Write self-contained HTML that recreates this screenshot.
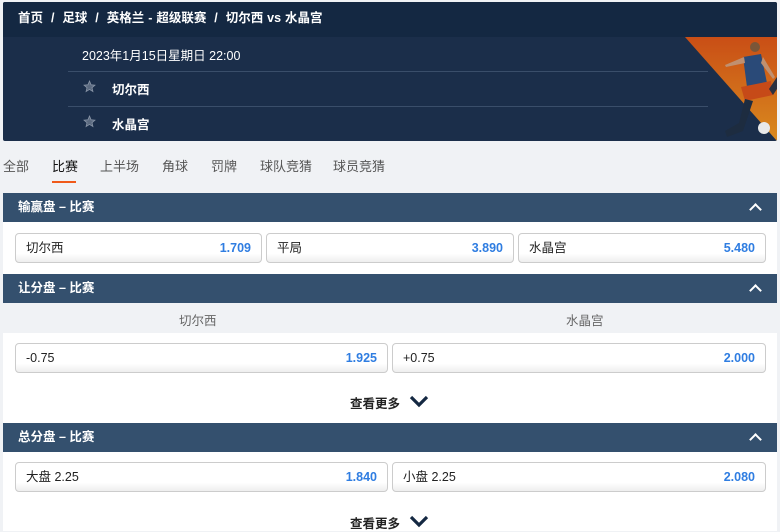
<!DOCTYPE html>
<html><head><meta charset="utf-8"><style>
*{margin:0;padding:0;box-sizing:border-box}
body{width:780px;height:531px;overflow:hidden;background:#f0f2f5;font-family:"Liberation Sans","Noto Sans CJK SC",sans-serif;position:relative;font-size:12px;color:#222}
.a{position:absolute}
.hdr{left:3px;top:2px;width:774px;height:139px;background:#1b2e4a;border-radius:2px;overflow:hidden}
.bc{left:0;top:0;width:774px;height:35px;background:#142842;color:#fff;font-weight:bold;font-size:12.5px;line-height:32px;padding-left:15px;white-space:pre;word-spacing:0.5px}
.ln{height:1px;background:#3a4e6a;left:65px;width:640px}
.tab{top:156px;font-size:13px;color:#555}
.sec{left:3px;width:774px;height:29px;background:#34506e;color:#fff;font-weight:bold;font-size:12.5px;line-height:29px;padding-left:15px}
.sec:after{content:"";position:absolute;right:17px;top:12px;width:7px;height:7px;border-left:2.5px solid #fff;border-top:2.5px solid #fff;transform:rotate(45deg)}
.pan{left:3px;width:774px;background:#fff}
.btn{height:30px;border:1px solid #ccc;border-radius:4px;background:linear-gradient(#fff 70%,#eee);font-size:12.5px;line-height:28px;padding:0 10px}
.btn b{float:right;color:#2f7de1;font-weight:bold}
.more{font-size:12.5px;font-weight:bold;color:#222}
</style></head><body>
<div class="a hdr">
 <div class="a bc">首页  /  足球  /  英格兰 - 超级联赛  /  切尔西 vs 水晶宫</div>
 <div class="a" style="left:79px;top:43px;color:#fff;font-size:12.5px">2023年1月15日星期日 22:00</div>
 <div class="a ln" style="top:69px"></div>
 <div class="a ln" style="top:104px"></div>
 <svg class="a" style="left:80px;top:78px" width="13" height="13" viewBox="0 0 24 24"><path d="M12 2l2.9 6.9 7.1.6-5.4 4.7 1.7 7L12 17.4 5.7 21.2l1.7-7L2 9.5l7.1-.6z" fill="#5b6a80" stroke="#8894a6" stroke-width="1.5"/></svg>
 <div class="a" style="left:109px;top:77px;color:#fff;font-weight:bold;font-size:12.5px">切尔西</div>
 <svg class="a" style="left:80px;top:113px" width="13" height="13" viewBox="0 0 24 24"><path d="M12 2l2.9 6.9 7.1.6-5.4 4.7 1.7 7L12 17.4 5.7 21.2l1.7-7L2 9.5l7.1-.6z" fill="#5b6a80" stroke="#8894a6" stroke-width="1.5"/></svg>
 <div class="a" style="left:109px;top:112px;color:#fff;font-weight:bold;font-size:12.5px">水晶宫</div>
 <svg class="a" style="left:682px;top:35px" width="92" height="104">
  <defs><linearGradient id="g" x1="0" y1="0" x2="0" y2="1"><stop offset="0" stop-color="#c94e16"/><stop offset="1" stop-color="#d98a1e"/></linearGradient></defs>
  <polygon points="0,0 92,0 92,104" fill="url(#g)"/>
  <circle cx="70" cy="10" r="5" fill="#7a5638"/>
  <path d="M58,20 L76,17 L82,46 L62,50 Z" fill="#2a4a78"/>
  <path d="M59,20 L40,28 L41,30 L60,26 Z" fill="#c09070"/>
  <path d="M78,20 L90,40 L88,42 L76,26 Z" fill="#c09070"/>
  <path d="M56,50 L86,44 L88,58 L60,64 Z" fill="#c64a18"/>
  <path d="M60,62 L54,86 L40,94 L42,100 L58,94 L68,64 Z" fill="#1d2c40"/>
  <path d="M84,52 L92,40 L92,52 L88,58 Z" fill="#2a3040"/>
  <circle cx="79" cy="91" r="6" fill="#e8e8e8"/>
 </svg>
</div>
<div class="a tab" style="left:3px">全部</div>
<div class="a tab" style="left:52px;color:#111">比赛</div>
<div class="a" style="left:52px;top:181px;width:24px;height:2px;background:#f05a1a"></div>
<div class="a tab" style="left:100px">上半场</div>
<div class="a tab" style="left:162px">角球</div>
<div class="a tab" style="left:211px">罚牌</div>
<div class="a tab" style="left:260px">球队竞猜</div>
<div class="a tab" style="left:333px">球员竞猜</div>

<div class="a sec" style="top:193px">输赢盘 – 比赛</div>
<div class="a pan" style="top:222px;height:52px"></div>
<div class="a btn" style="left:15px;top:233px;width:247px">切尔西<b>1.709</b></div>
<div class="a btn" style="left:266px;top:233px;width:248px">平局<b>3.890</b></div>
<div class="a btn" style="left:518px;top:233px;width:248px">水晶宫<b>5.480</b></div>

<div class="a sec" style="top:274px">让分盘 – 比赛</div>
<div class="a" style="left:179px;top:310px;color:#666;font-size:12.5px">切尔西</div>
<div class="a" style="left:566px;top:310px;color:#666;font-size:12.5px">水晶宫</div>
<div class="a pan" style="top:333px;height:90px"></div>
<div class="a btn" style="left:15px;top:343px;width:373px">-0.75<b>1.925</b></div>
<div class="a btn" style="left:392px;top:343px;width:374px">+0.75<b>2.000</b></div>
<div class="a more" style="left:350px;top:393px">查看更多</div>
<svg class="a" style="left:409px;top:395px" width="20" height="13"><path d="M2,2 L10,10 L18,2" fill="none" stroke="#142842" stroke-width="3.2"/></svg>

<div class="a sec" style="top:423px">总分盘 – 比赛</div>
<div class="a pan" style="top:452px;height:79px"></div>
<div class="a btn" style="left:15px;top:462px;width:373px">大盘 2.25<b>1.840</b></div>
<div class="a btn" style="left:392px;top:462px;width:374px">小盘 2.25<b>2.080</b></div>
<div class="a more" style="left:350px;top:513px">查看更多</div>
<svg class="a" style="left:409px;top:515px" width="20" height="13"><path d="M2,2 L10,10 L18,2" fill="none" stroke="#142842" stroke-width="3.2"/></svg>
</body></html>
